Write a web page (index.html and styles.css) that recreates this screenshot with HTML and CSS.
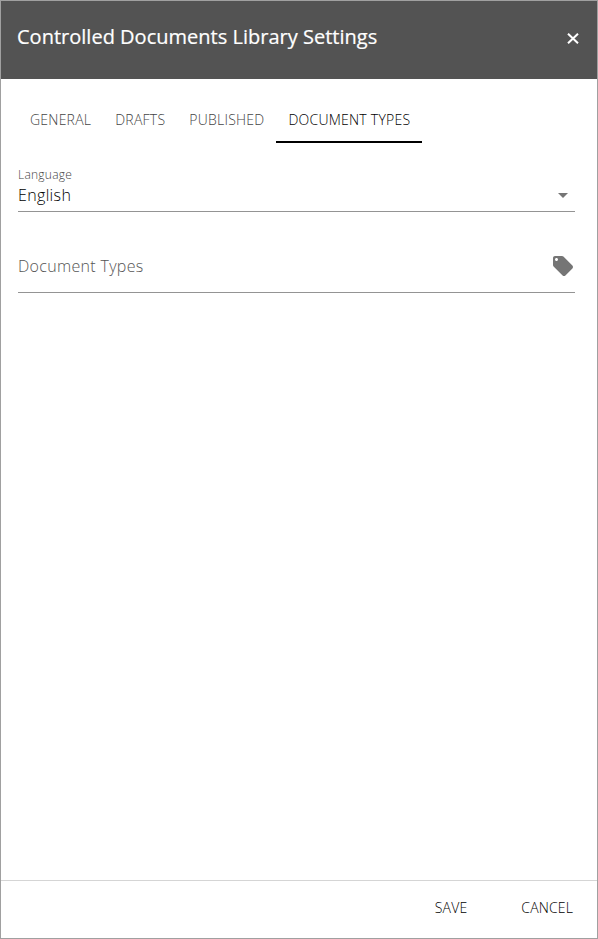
FILE: index.html
```html
<!DOCTYPE html>
<html lang="en">
<head>
<meta charset="utf-8">
<title>Controlled Documents Library Settings</title>
<link rel="stylesheet" href="styles.css">
</head>
<body>
<div class="dialog">
  <header class="header">
    <h1 class="title">Controlled Documents Library Settings</h1>
    <button class="close" aria-label="Close"><svg width="12" height="11" viewBox="0 0 12 11"><path d="M1 .7L11 10.3M11 .7L1 10.3" stroke="#fff" stroke-width="2"/></svg></button>
  </header>
  <main class="content">
    <nav class="tabs">
      <a class="tab">GENERAL</a>
      <a class="tab">DRAFTS</a>
      <a class="tab">PUBLISHED</a>
      <a class="tab active">DOCUMENT TYPES</a>
    </nav>
    <div class="field language">
      <div class="label">Language</div>
      <div class="row"><span class="value">English</span><span class="arrow"></span></div>
    </div>
    <div class="field types">
      <span class="placeholder">Document Types</span>
      <svg class="tag" width="24" height="24" viewBox="0 0 24 24"><path fill="#757575" d="M21.41 11.58l-9-9C12.05 2.22 11.55 2 11 2H4c-1.1 0-2 .9-2 2v7c0 .55.22 1.05.59 1.42l9 9c.36.36.86.58 1.41.58.55 0 1.05-.22 1.41-.59l7-7c.37-.36.59-.86.59-1.41 0-.55-.23-1.06-.59-1.42zM5.5 7C4.67 7 4 6.33 4 5.5S4.67 4 5.5 4 7 4.67 7 5.5 6.33 7 5.5 7z"/></svg>
    </div>
  </main>
  <footer class="footer">
    <button class="action">SAVE</button>
    <button class="action">CANCEL</button>
  </footer>
</div>
</body>
</html>
```
FILE: styles.css
```css
* { box-sizing: border-box; }
body { margin: 0; font-family: "Open Sans", sans-serif; }
.dialog { width: 598px; height: 939px; border: 1px solid #a0a0a0; display: flex; flex-direction: column; background: #fff; }
.header { height: 78px; flex: none; background: #535353; display: flex; justify-content: space-between; padding: 22px 18px 0 16px; }
.title { margin: 0; color: #fff; font-size: 20px; line-height: 27px; font-weight: 500; letter-spacing: 0.01px; -webkit-text-stroke: 0.2px #fff; }
button { border: 0; background: none; padding: 0; font-family: inherit; }
.close { height: 11px; margin-top: 10px; display: flex; }
.content { flex: 1; padding: 17px 22px 0 17px; }
.tabs { display: flex; height: 47px; }
.tab { padding: 0 12px; line-height: 48px; font-size: 14px; font-weight: 300; letter-spacing: 0.235px; color: #444; }
.tab.active { color: #000; border-bottom: 2px solid #000; }
.field { border-bottom: 1px solid #949494; }
.language { height: 69px; padding-top: 23px; }
.label { font-size: 12px; line-height: 17px; font-weight: 300; letter-spacing: 0.25px; color: #444; }
.row { display: flex; align-items: center; justify-content: space-between; height: 24px; }
.value { font-size: 16px; font-weight: 300; letter-spacing: 0.35px; color: #000; }
.arrow { border: 5px solid transparent; border-top-color: #757575; border-bottom: 0; margin-right: 7px; }
.types { height: 81px; padding-top: 42px; display: flex; justify-content: space-between; align-items: flex-start; }
.placeholder { font-size: 16px; line-height: 24px; font-weight: 300; letter-spacing: 0.32px; color: #555; }
.footer { height: 58px; flex: none; border-top: 1px solid #d5d5d5; display: flex; justify-content: flex-end; gap: 54px; padding: 0 24px 4px 0; }
.action { font-size: 14px; font-weight: 300; letter-spacing: 0.15px; color: #000; }
```
